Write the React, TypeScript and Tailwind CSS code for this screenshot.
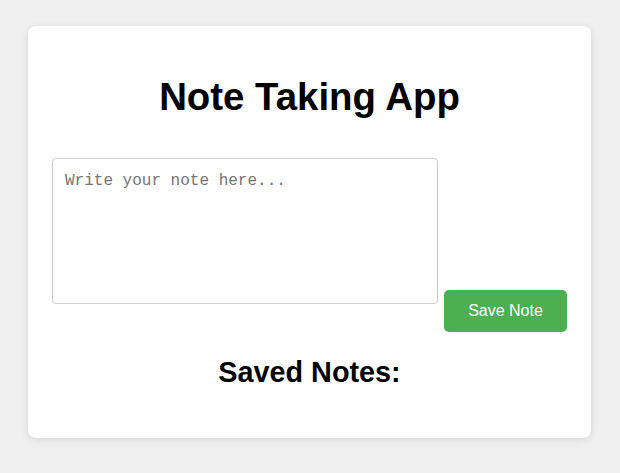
import React, { useState } from 'react';

export default function App() {
  const [text, setText] = useState('');
  const [notes, setNotes] = useState<string[]>([]);

  const saveNote = () => {
    if (!text.trim()) return;
    setNotes([...notes, text.trim()]);
    setText('');
  };

  return (
    <div className="min-h-[473px] bg-[#f0f0f0] pt-[26px] pl-[28px] font-['Liberation_Sans',Arial,sans-serif]">
      {/* Card */}
      <div className="w-[563px] bg-white rounded-lg shadow-[0_2px_10px_rgba(0,0,0,0.1)] px-6 pt-[49px] pb-[49px]">
        <h1 className="text-[38.4px] leading-[44px] font-bold text-black text-center">
          Note Taking App
        </h1>

        <div className="flex items-end mt-[39px]">
          <textarea
            value={text}
            onChange={(e) => setText(e.target.value)}
            placeholder="Write your note here..."
            className="w-[386px] h-[146px] mb-[28px] border border-[#ccc] rounded-[4px] px-3 py-[10px] text-base font-['Liberation_Mono','Courier_New',monospace] resize-none outline-none placeholder:text-[#757575]"
          />
          <button
            onClick={saveNote}
            className="ml-[6px] w-[123px] h-[42px] bg-[#4caf50] text-white text-base rounded-[5px]"
          >
            Save Note
          </button>
        </div>

        <h2 className="mt-6 text-[28.8px] leading-[33px] font-bold text-black text-center">
          Saved Notes:
        </h2>
        {notes.length > 0 && (
          <ul className="mt-2">
            {notes.map((n, i) => (
              <li key={i} className="py-2 border-b border-[#eee]">{n}</li>
            ))}
          </ul>
        )}
      </div>
    </div>
  );
}
